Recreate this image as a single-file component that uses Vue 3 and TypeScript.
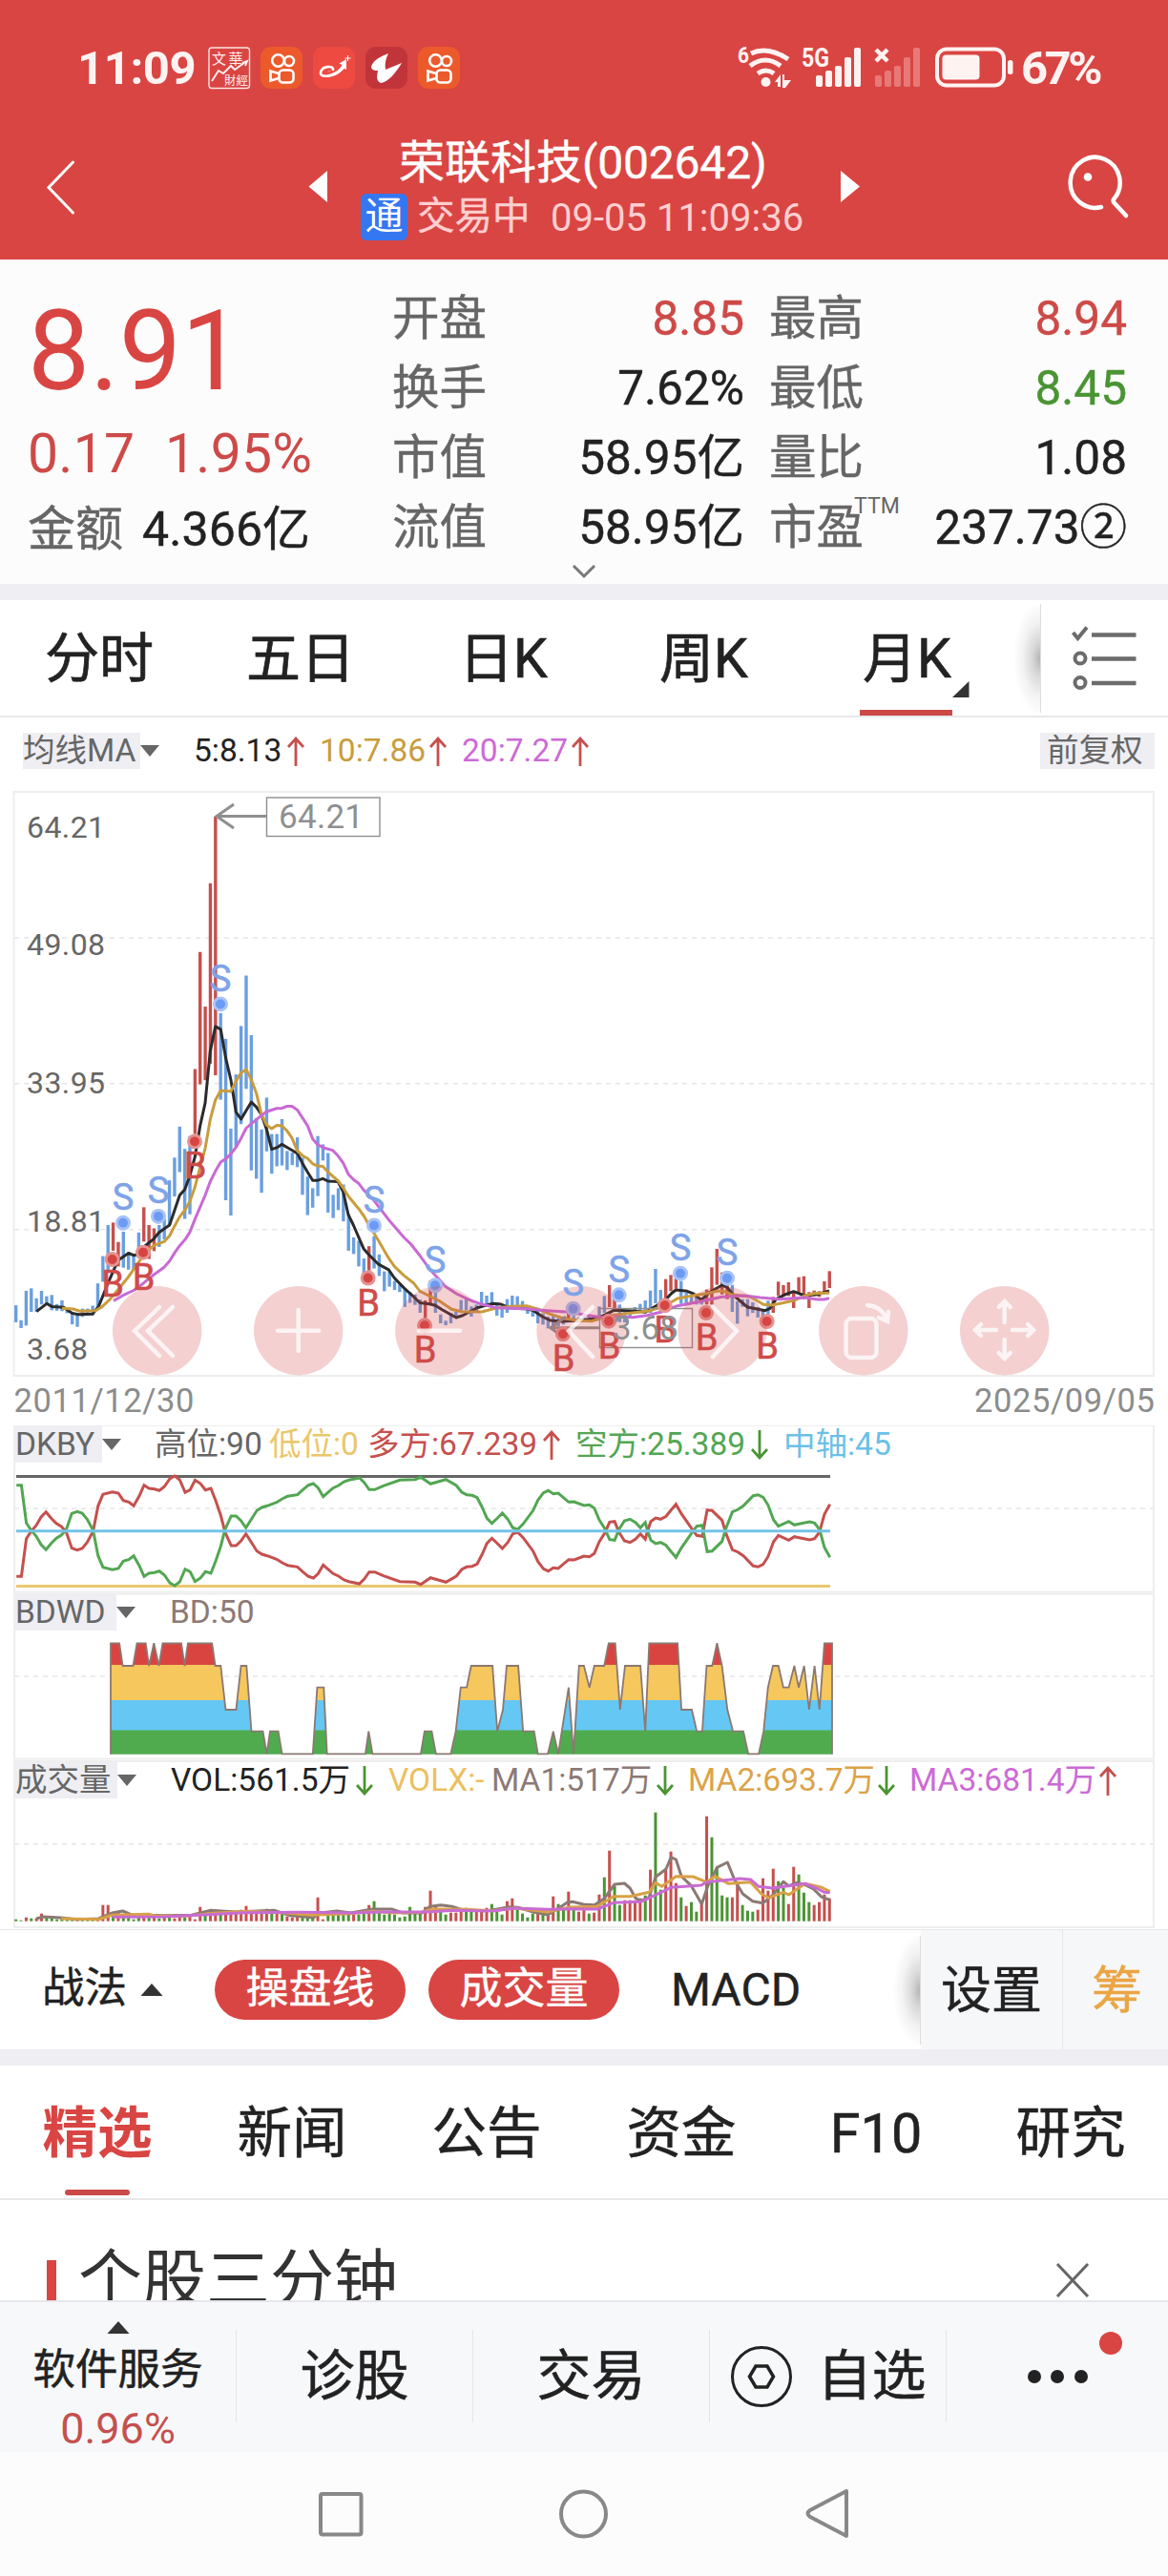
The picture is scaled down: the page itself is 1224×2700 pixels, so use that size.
<script setup lang="ts">
type Pt = [number, number]
interface Legend { text: string; color: string; w: number; arrow?: 'up' | 'down'; tw?: number }

const STEP = 5.362
const barX = (i: number): number => 16.7 + STEP * i

// Two sampling grids: the first 80 months and the remainder
const early = ([x, y]: Pt): Pt => [x / 3, 820 + y / 2.306]
const late = ([x, y]: Pt): Pt => [430 + x / 3, 1080 + y / 3]
const sub = (top: number) => ([x, y]: Pt): Pt => [x / 1.742, top + y / 3]
const toPath = (pts: Pt[]): string => pts.map(p => p[0].toFixed(1) + ',' + p[1].toFixed(1)).join(' ')
const parse = (s: string): Pt[] => s.trim().split(/\s+/).map(p => p.split(',').map(Number) as Pt)

const earlyBars = '1264,1305 1300,1319 1229,1313 1223,1280 1247,1280 1229,1262 1242,1262 1239,1276 1261,1277 1252,1278 1270,1283 1280,1310 1282,1316 1272,1292 1272,1288 1265,1288 1211,1270 1145,1207 1070,1185 1064,1132 1111,1170 1086,1173 1135,1178 1140,1178 1088,1150 1027,1110 1070,1152 1078,1133 1070,1123 1055,1105 962,1070 907,1001 832,942 886,1055 855,1044 693,850 410,730 542,720 244,680 83,708 558,767 620,1010 837,1047 706,880 589,826 467,741 611,938 812,958 839,992 762,892 850,946 850,928 814,926 891,937 895,925 858,930 907,997 953,1046 981,1028 855,1000 875,914 896,1040 997,1053 981,1034 972,1061 1043,1132 1100,1140 1108,1170 1151,1195 1121,1180 1097,1175 1141,1193 1182,1230 1182,1219 1205,1227 1214,1232 1225,1268 1232,1258 1238,1263 1250,1282'
const lateBars = '849,905 787,860 825,888 893,921 913,927 888,921 885,900 848,880 845,880 868,900 862,888 822,860 834,862 823,860 855,897 870,903 845,888 834,870 836,868 851,880 868,891 878,900 880,921 890,925 900,937 898,935 905,930 900,925 885,915 895,912 902,918 895,915 900,915 898,912 868,900 835,888 801,870 834,880 862,917 880,918 880,900 870,890 860,885 849,882 818,888 750,858 816,855 782,850 769,820 780,812 788,860 825,860 835,860 835,862 840,862 815,862 745,862 687,800 761,830 792,845 800,885 852,922 845,869 845,899 855,888 870,903 878,907 850,898 838,888 790,835 801,836 792,835 820,873 776,825 773,845 823,873 818,835 820,838 789,825 757,810'
const redSet = new Set<number>([19, 20, 25, 26, 27, 35, 36, 37, 38, 39, 69, 80, 81, 108, 116, 117, 127, 128, 129, 135, 136, 137, 138, 139])
const bars = [
  ...parse(earlyBars).map(([a, b]) => [820 + a / 2.306, 820 + b / 2.306]),
  ...parse(lateBars).map(([a, b]) => [1080 + a / 3, 1080 + b / 3]),
].map(([a, b], i) => ({ x: barX(i) - 1.7, y: a, h: b - a, fill: redSet.has(i) || i >= 148 ? '#c5504e' : '#6b9fdf' }))

const line = (a: string, b: string): string => toPath([...parse(a).map(early), ...parse(b).map(late)])
const ma5 = line(
  '115,1279 147,1260 163,1267 200,1269 227,1283 245,1286 291,1285 310,1267 340,1210 371,1155 404,1138 420,1143 436,1141 452,1123 484,1103 500,1088 533,1070 565,998 581,984 597,950 613,905 629,830 645,775 661,650 677,590 694,597 710,668 726,720 742,797 758,814 774,793 790,773 806,785 822,803 838,838 854,887 870,883 886,875 902,882 935,897 951,921 967,942 983,962 999,962 1015,958 1031,964 1063,965 1079,990 1095,1045 1111,1070 1143,1127 1160,1142 1190,1165 1222,1178 1240,1198 1270,1222 1300,1243 1320,1258',
  '60,860 79,865 100,878 144,903 165,896 210,872 260,859 285,861 310,872 350,873 385,880 415,900 440,912 475,915 530,912 590,905 615,893 640,880 700,882 740,886 770,868 800,850 820,828 835,816 870,820 890,828 915,848 940,824 980,801 996,808 1015,832 1060,870 1090,876 1115,881 1130,875 1150,845 1180,830 1205,821 1240,834 1280,830 1317,819')
const ma10 = line(
  '195,1271 230,1273 250,1278 300,1277 320,1268 345,1250 371,1226 404,1195 436,1160 452,1142 484,1119 516,1110 533,1096 549,1072 565,1050 581,1034 597,1013 613,978 629,930 645,885 661,815 677,768 694,745 726,747 742,722 758,702 774,694 790,718 806,752 822,802 838,828 854,837 870,829 886,830 902,842 918,860 935,891 951,902 967,909 983,922 999,927 1015,928 1031,942 1063,963 1079,980 1095,1000 1127,1030 1143,1047 1160,1070 1190,1108 1222,1150 1240,1170 1270,1192 1300,1210 1320,1230',
  '40,825 90,850 130,877 160,884 225,885 270,873 320,868 365,866 400,876 440,892 480,905 530,913 570,914 600,905 640,895 700,888 750,882 800,866 840,843 900,832 930,828 965,819 985,820 1010,830 1070,838 1110,862 1135,864 1170,857 1210,848 1240,834 1270,827 1317,826')
const ma20 = line(
  '357,1253 387,1240 420,1228 452,1210 484,1190 516,1172 533,1157 549,1137 565,1120 581,1106 597,1087 613,1056 645,998 661,965 677,940 694,918 710,910 726,898 742,882 758,860 774,836 790,825 822,805 838,796 870,788 886,788 902,783 918,783 935,792 967,830 983,862 999,876 1020,884 1047,890 1063,903 1079,920 1095,947 1111,960 1127,969 1143,985 1175,1010 1222,1057 1270,1100',
  '0,670 30,708 60,750 110,805 145,828 180,845 220,860 270,872 360,875 430,881 500,886 550,895 600,902 640,900 700,902 745,896 790,885 840,866 900,855 980,838 1050,834 1100,840 1160,845 1240,840 1280,846 1300,846 1317,842')

const sells: Pt[] = [...parse('387,1065 498,1049 693,536 1176,1071').map(early), ...parse('78,802 512,875 656,832 849,764 996,779').map(late)]
const buys: Pt[] = [...parse('353,1153 450,1136 612,868 1157,1198').map(early), ...parse('45,928 480,955 624,914 800,865 930,888 1121,915').map(late)]

const axis = [
  { t: '64.21', y: 878 }, { t: '49.08', y: 1001 }, { t: '33.95', y: 1146 }, { t: '18.81', y: 1291 }, { t: '3.68', y: 1425 },
]
const grid = [983, 1135.7, 1288.8]
const buttons = [164.7, 312.7, 460.8, 609, 757, 904.8, 1052.7]

const bull = parse('30,517 39,517 48,398 57,375 66,357 75,330 84,314 94,335 103,350 112,360 121,378 131,428 141,434 150,429 159,410 170,375 179,295 188,259 205,251 216,255 225,278 235,283 244,295 254,265 263,230 272,240 282,242 291,247 300,235 310,210 319,201 328,213 338,253 347,245 356,214 366,225 375,245 385,240 394,280 403,325 411,378 422,420 431,420 440,405 449,383 459,410 469,437 478,447 488,452 505,463 516,475 525,482 543,487 553,503 563,517 572,522 581,508 590,481 608,508 618,516 628,528 637,533 656,540 665,525 674,503 684,503 700,515 730,533 758,535 768,542 786,521 800,528 814,535 833,516 843,495 852,487 862,485 871,478 880,448 889,413 898,397 908,413 917,429 927,410 936,383 945,378 955,395 973,437 982,470 992,493 1001,500 1010,490 1019,492 1038,464 1048,465 1066,453 1076,455 1085,445 1094,408 1104,380 1113,346 1122,344 1130,378 1140,405 1150,410 1160,400 1169,383 1178,400 1182,375 1188,344 1197,333 1206,337 1216,328 1225,308 1234,290 1244,320 1262,365 1272,388 1282,391 1291,308 1300,310 1318,340 1326,385 1337,433 1347,440 1357,452 1375,484 1384,487 1393,479 1402,455 1412,408 1421,388 1440,403 1450,392 1459,395 1478,402 1487,398 1496,378 1505,322 1515,290')
const bullLine = toPath(bull.map(sub(1480)))
const bearLine = toPath(bull.map(([x, y]): Pt => [x, 747 - y]).map(sub(1480)))

const wave = toPath(parse('202,1076 202,727 218,727 224,798 243,798 250,727 266,727 272,798 281,727 290,798 297,727 331,727 337,798 343,727 387,727 393,798 403,798 412,936 431,936 440,798 450,798 459,1004 480,1004 487,1075 493,1004 508,1004 515,1075 571,1075 579,866 591,866 597,1075 667,1075 673,1004 680,1075 768,1075 775,1004 788,1004 796,1075 823,1075 832,1004 841,866 852,866 860,798 899,798 908,1004 918,936 925,798 946,798 955,1004 975,1004 982,1075 1000,1075 1010,1004 1019,1075 1038,866 1047,1075 1057,798 1066,798 1076,866 1085,798 1103,798 1111,727 1123,727 1132,936 1141,798 1169,798 1178,1004 1185,727 1237,727 1244,936 1263,936 1272,1004 1282,1004 1290,798 1300,798 1309,727 1318,798 1328,936 1338,1004 1357,1004 1366,1075 1385,1075 1394,1004 1402,866 1411,798 1421,798 1430,866 1440,866 1450,798 1458,866 1468,798 1477,936 1487,798 1496,936 1505,727 1519,727 1519,1076').map(sub(1480)))

const volumes = '2g 1g 4r 3g 3r 8r 4g 4g 2g 3g 3g 3g 2r 2g 2g 2g 3r 17r 17r 9g 9r 7g 5g 2g 4g 7r 6g 5r 3g 4r 5g 3r 6r 4g 5r 2r 15r 11g 10r 12r 8g 9r 11r 11r 12r 16r 11r 10r 12r 13r 8g 9r 8g 5r 4r 6r 4g 5g 4g 25r 2r 8g 9g 11g 9g 8g 8r 7g 8g 17r 21g 9g 7g 8g 7g 4g 5g 15g 9g 8g 15r 32r 17r 13g 7g 9r 9r 12r 14g 12g 11r 12r 14r 18g 12g 7g 21r 24r 12g 8g 4g 8g 9r 9g 8r 26r 18g 12g 31r 13g 10r 15r 8g 9r 28r 46g 74r 37g 17g 22r 22r 22r 24r 27g 54r 114g 33g 54r 73r 40r 25g 16r 20g 10g 20r 110r 88g 57g 27g 25g 25r 42r 17g 11g 10g 12r 45r 32r 55r 42g 35g 18r 57r 49g 30g 20g 17r 20r 28r 24r'
  .split(' ').map((s, i) => ({ x: barX(i) - 1.5, h: parseInt(s), fill: s.endsWith('r') ? '#c5504e' : '#4a9433' }))
const vol = (s: string): string => toPath(parse(s).map(sub(1830)))
const v1 = vol('66,543 80,537 110,540 140,545 180,543 205,525 224,519 240,531 300,533 350,532 385,517 430,522 460,520 500,517 530,533 560,538 572,540 585,525 615,519 640,525 680,513 715,513 735,525 770,525 785,505 805,500 825,505 845,516 890,518 930,506 945,508 975,523 1000,531 1020,510 1035,493 1045,490 1065,498 1085,500 1103,480 1122,435 1140,432 1150,447 1160,478 1170,487 1185,475 1197,412 1216,387 1225,350 1234,357 1244,410 1262,440 1281,497 1292,440 1309,382 1328,366 1342,425 1356,465 1374,488 1393,494 1410,470 1430,427 1440,440 1455,430 1470,437 1485,450 1500,475 1515,484')
const v2 = vol('112,543 180,545 205,532 270,529 285,535 340,535 390,526 450,520 520,525 570,532 640,527 680,520 720,525 770,523 790,513 850,514 900,518 940,510 1000,522 1040,507 1090,505 1120,473 1150,473 1185,460 1197,430 1208,442 1234,410 1265,411 1290,428 1305,410 1330,433 1370,428 1390,465 1403,478 1430,460 1440,468 1470,433 1500,445 1515,458')
const v3 = vol('205,538 300,537 380,530 450,524 550,523 640,525 700,522 780,522 830,517 900,519 940,510 1000,514 1050,512 1090,513 1120,493 1170,490 1195,470 1225,445 1280,438 1290,428 1350,417 1370,420 1385,442 1410,447 1470,433 1490,447 1505,460 1515,461')

const dkby: Legend[] = [
  { text: '高位:90', color: '#666', w: 120 },
  { text: '低位:0', color: '#ebc66a', w: 103 },
  { text: '多方:67.239', color: '#c5504e', w: 218, arrow: 'up', tw: 184 },
  { text: '空方:25.389', color: '#53a653', w: 218, arrow: 'down', tw: 184 },
  { text: '中轴:45', color: '#6cc0e8', w: 130 },
]
const volLegend: Legend[] = [
  { text: 'VOL:561.5万', color: '#222', w: 228, arrow: 'down', tw: 194 },
  { text: 'VOLX:-', color: '#ebc05f', w: 108 },
  { text: 'MA1:517万', color: '#8d7975', w: 206, arrow: 'down', tw: 173 },
  { text: 'MA2:693.7万', color: '#dba348', w: 232, arrow: 'down', tw: 199 },
  { text: 'MA3:681.4万', color: '#cc6ad6', w: 230, arrow: 'up', tw: 199 },
]
const maLegend: Legend[] = [
  { text: '5:8.13', color: '#222', w: 132, arrow: 'up', tw: 98 },
  { text: '10:7.86', color: '#c99c3d', w: 149, arrow: 'up', tw: 115 },
  { text: '20:7.27', color: '#cc6ad6', w: 150, arrow: 'up', tw: 115 },
]
const stats = [
  ['开盘', '8.85', 'red', '最高', '8.94', 'red'],
  ['换手', '7.62%', '', '最低', '8.45', 'green'],
  ['市值', '58.95亿', '', '量比', '1.08', ''],
  ['流值', '58.95亿', '', '市盈', '237.73②', ''],
]
const periods = [{ t: '分时', w: 211 }, { t: '五日', w: 223 }, { t: '日K', w: 210 }, { t: '周K', w: 213 }, { t: '月K', w: 100 }]
const tabs = ['精选', '新闻', '公告', '资金', 'F10', '研究']
const frames = [{ y: 1494, h: 174.5, g: 1581 }, { y: 1670.5, h: 173, g: 1757 }, { y: 1846, h: 174, g: 1932.7 }]
</script>

<template>
  <div class="screen">
    <header class="top">
      <div class="status">
        <span class="clock">11:09</span>
        <svg class="apps" width="266" height="46" viewBox="217 48 266 46">
          <rect x="219" y="50" width="42.500" height="42.500" rx="3" fill="none" stroke="#fbe4e2" stroke-width="1.400" />
          <g fill="#fdeeee" class="seal">
            <text x="222" y="67" font-size="15">文</text><text x="239.500" y="67" font-size="15">華</text>
            <text x="235" y="89" font-size="12.500">財</text><text x="247.500" y="89" font-size="12.500">經</text>
          </g>
          <path d="M222 85l7-11 5 3 8-8 4 4 11-8M254 66l5-2-2 5" fill="none" stroke="#fdeeee" stroke-width="2" />
          <g v-for="x in [273, 438]" :key="x" :transform="`translate(${x} 49)`">
            <rect width="44" height="44" rx="11" fill="#ec5a2b" />
            <g fill="none" stroke="#fff" stroke-width="2.600">
              <circle cx="18.500" cy="14.500" r="6.300" /><circle cx="30" cy="15" r="5" />
              <rect x="19.500" y="24.500" width="15" height="13" rx="4" /><path d="M19 28l-8.500-2.500v10L19 33" />
            </g>
          </g>
          <rect x="328" y="49" width="44" height="44" rx="11" fill="#ee4a42" />
          <path d="M349 73c1-5-13-4-13 4 0 4 12 5 25-7" fill="none" stroke="#fff" stroke-width="2.600" stroke-linecap="round" />
          <path d="M339 80c9 0 17-7 19.500-12l-3-1.500L363 62v11l-2.500-1.500c-5 7-14 11-21.500 8.500zM343 76c2-2 3-2 5-3" fill="#fff" />
          <path d="M364.500 58v6M361.500 61h6" stroke="#fff" stroke-width="1" />
          <rect x="383" y="49" width="44" height="44" rx="11" fill="#c1353a" />
          <path d="M407 56c-8 3-16 7-18 14 0 4 5 4 7 4-1 6-2 11 3 13 8-1 16-11 22-21l-17 7c-1-6 0-11 3-17z" fill="#fff" />
        </svg>
        <svg class="signal" width="298" height="50" viewBox="768 46 298 50" fill="#fff3f2">
          <g class="tiny"><text x="773" y="66" font-size="23" textLength="12" lengthAdjust="spacingAndGlyphs">6</text><text x="840" y="70" font-size="28" textLength="29" lengthAdjust="spacingAndGlyphs">5G</text></g>
          <g fill="none" stroke="#fff3f2" stroke-width="5"><path d="M787 56q17-8 39 6M786 69q16-12 32 0M794 77q9-6 17 0" /></g>
          <circle cx="802.500" cy="86" r="5" />
          <path d="M812 86l6-8v13h-3v-5zM822 78v6h7l-6 8h-3V78z" />
          <rect x="855" y="79" width="7" height="12" rx="2" /><rect x="865" y="74" width="7" height="17" rx="2" /><rect x="875" y="69" width="7" height="22" rx="2" /><rect x="885" y="60" width="7" height="31" rx="2" /><rect x="895" y="50" width="7" height="41" rx="2" />
          <path d="M918 52l12 12M930 52l-12 12" stroke="#fff3f2" stroke-width="4.500" />
          <g fill="#e87977"><rect x="917" y="79" width="7" height="12" rx="2" /><rect x="927" y="74" width="7" height="17" rx="2" /><rect x="937" y="69" width="7" height="22" rx="2" /><rect x="947" y="60" width="7" height="31" rx="2" /><rect x="957" y="50" width="7" height="41" rx="2" /></g>
          <rect x="982" y="51.500" width="70" height="38" rx="10" fill="none" stroke="#fff3f2" stroke-width="4" />
          <rect x="987.500" y="57.500" width="39" height="26" rx="4" /><rect x="1056" y="63" width="5.500" height="15" rx="2.500" />
        </svg>
        <span class="pct">67%</span>
      </div>
      <div class="title">
        <svg class="back" width="40" height="60" viewBox="44 166 40 60" fill="none" stroke="#fff" stroke-width="3"><path d="M76.500 170L51 196.500l25.500 26.500" stroke-linecap="round" /></svg>
        <svg class="prev" width="22" height="36" viewBox="322 178 22 36"><path d="M343 179v33l-19.500-16.500z" fill="#fff" /></svg>
        <div class="names">
          <div class="name">荣联科技<span>(002642)</span></div>
          <div class="time"><i>通</i><b>交易中</b><span>09-05 11:09:36</span></div>
        </div>
        <svg class="next" width="22" height="36" viewBox="880 178 22 36"><path d="M881 179v33l20-16.500z" fill="#fff" /></svg>
        <svg class="search" width="66" height="68" viewBox="1118 162 66 68" fill="none" stroke="#fff" stroke-width="4.500" stroke-linecap="round">
          <path d="M1154 217a26 26.500 0 1 1 13-8q-1 2 1 4l12 13" /><circle cx="1140" cy="185.500" r="4.300" fill="#fff" stroke="none" />
        </svg>
      </div>
    </header>

    <section class="quote">
      <div class="left">
        <div class="price">8.91</div>
        <div class="chg"><span>0.17</span><span>1.95%</span></div>
        <div class="amt"><span>金额</span><b>4.366亿</b></div>
      </div>
      <div class="stats">
        <div v-for="(r, i) in stats" :key="i" class="row">
          <span class="k">{{ r[0] }}</span><span class="v" :class="r[2]">{{ r[1] }}</span>
          <span class="k k2">{{ r[3] }}<sup v-if="i === 3">TTM</sup></span><span class="v v2" :class="r[5]">{{ r[4] }}</span>
        </div>
      </div>
      <svg class="more" width="26" height="16" viewBox="0 0 26 16"><path d="M2 2l11 11L24 2" fill="none" stroke="#777" stroke-width="3" /></svg>
    </section>

    <nav class="periods">
      <span v-for="p in periods" :key="p.t" :style="{ width: p.w + 'px' }" :class="{ on: p.t === '月K' }">{{ p.t }}</span>
      <svg class="corner" width="18" height="17"><path d="M17.500 0v17H0z" fill="#333" /></svg>
      <div class="shade"></div>
      <div class="list">
        <svg width="72" height="70" viewBox="1121 655 72 70" fill="none" stroke="#6c6c6c" stroke-width="4">
          <path d="M1124.500 663l5 6 9.500-11.500" /><circle cx="1132" cy="690" r="5.500" /><circle cx="1132" cy="715.500" r="5.500" />
          <path d="M1144 665.500h46.500M1144 690.500h46.500M1144 716h46.500" stroke-width="4.500" />
        </svg>
      </div>
    </nav>

    <div class="legend ma">
      <span class="tag" style="width: 123px">均线MA</span><i class="caret"></i>
      <span v-for="(l, i) in maLegend" :key="l.text" class="item" :class="{ first: i === 0 }" :style="{ width: l.w + 'px', color: l.color }">
        <em :style="{ width: l.tw + 'px' }">{{ l.text }}</em>
        <svg width="18" height="31" viewBox="0 0 18 31"><path d="M9 31V2M1 11L9 2l8 9" fill="none" stroke="#c5504e" stroke-width="2.800" /></svg>
      </span>
      <span class="adj">前复权</span>
    </div>

    <svg class="chart" width="1224" height="678" viewBox="0 816 1224 678">
      <rect x="14.500" y="830" width="1194.500" height="612" fill="#fff" stroke="#eee" stroke-width="2" />
      <g stroke="#e6e6e6" stroke-width="1.500" stroke-dasharray="5 5"><path v-for="y in grid" :key="y" :d="`M15 ${y}H1209`" /></g>
      <g fill="#666" font-size="32"><text v-for="a in axis" :key="a.t" x="28" :y="a.y" :textLength="a.t.length > 4 ? 82 : 64">{{ a.t }}</text></g>
      <rect v-for="(b, i) in bars" :key="i" :x="b.x" :y="b.y" width="3.400" :height="b.h" :fill="b.fill" />
      <g fill="none" stroke-linejoin="round" stroke-width="3">
        <polyline :points="ma5" stroke="#2b2b2b" /><polyline :points="ma10" stroke="#c99c3d" /><polyline :points="ma20" stroke="#c86ad4" />
      </g>
      <g fill="none" stroke="#8f8f8f" stroke-width="3">
        <path d="M279 855.500H227M245 843l-18 12.500 18 12.500" /><path d="M628 1391.700H577M593 1380l-16 11.700 16 12" />
        <g stroke-width="1.400"><rect x="279.500" y="836" width="118.500" height="40.500" /><rect x="628.500" y="1371.500" width="97" height="41" /></g>
      </g>
      <g v-for="(p, i) in sells" :key="'s' + i"><circle :cx="p[0]" :cy="p[1]" r="8" fill="#a7c3f7" /><circle :cx="p[0]" :cy="p[1]" r="5" fill="#6d9bf3" /></g>
      <g v-for="(p, i) in buys" :key="'b' + i"><circle :cx="p[0]" :cy="p[1]" r="8" fill="#e59390" /><circle :cx="p[0]" :cy="p[1]" r="5" fill="#d64543" /></g>
      <circle v-for="x in buttons" :key="x" :cx="x" cy="1394.700" r="46.700" fill="#d64a4d" fill-opacity=".26" />
      <g fill="none" stroke="#fff" stroke-opacity=".75" stroke-width="4.500" stroke-linecap="round">
        <path d="M167 1370l-26 25 26 26M181 1370l-26 25 26 26" />
        <path d="M291 1394.700h43M312.700 1373v43M439 1394.700h43" />
        <path d="M621 1370l-25 25 25 27M747 1370l25 25-25 27" />
        <rect x="886.500" y="1382" width="32" height="41" rx="6" /><path d="M909 1368q14 1 20 14M921 1381l9 4 1-10" />
        <path d="M1052.700 1386v-22m-6 6l6-6 6 6M1052.700 1404v20m-6-6l6 6 6-6M1044 1394h-22m6-6l-6 6 6 6M1061 1394h22m-6-6l6 6-6 6" />
      </g>
      <g font-size="38" text-anchor="middle" stroke-width=".6">
        <text v-for="(p, i) in sells" :key="'st' + i" :x="p[0]" :y="p[1] - 13.500" fill="#7ea3e8" stroke="#7ea3e8">S</text>
        <text v-for="(p, i) in buys" :key="'bt' + i" :x="p[0] + .5" :y="p[1] + 39" fill="#cf4b49" stroke="#cf4b49">B</text>
      </g>
      <g fill="#8f8f8f" font-size="35"><text x="292" y="867.500" textLength="89">64.21</text><text x="642" y="1404" textLength="69">3.68</text></g>
      <g fill="#8c8c8c" font-size="34.500"><text x="14.500" y="1479.500" textLength="189">2011/12/30</text><text x="1021" y="1479.500" textLength="189">2025/09/05</text></g>
    </svg>

    <div class="panels">
      <svg class="plot" width="1224" height="528" viewBox="0 1494 1224 528">
        <g v-for="f in frames" :key="f.y">
          <rect x="15" :y="f.y" width="1194" :height="f.h" fill="none" stroke="#eee" stroke-width="2" />
          <path :d="`M15 ${f.g}H1209`" stroke="#e6e6e6" stroke-width="1.500" stroke-dasharray="5 5" />
        </g>
        <g fill="none" stroke-width="3">
          <path d="M17 1547.500H870" stroke="#666" /><path d="M17 1662.500H870" stroke="#ebc76f" />
          <polyline :points="bullLine" stroke="#c5504e" /><polyline :points="bearLine" stroke="#53a653" />
          <path d="M17 1604.700H870" stroke="#75c3e6" />
        </g>
        <defs><clipPath id="wave"><polygon :points="wave" /></clipPath></defs>
        <g clip-path="url(#wave)">
          <rect x="100" y="1721" width="790" height="25" fill="#d94441" /><rect x="100" y="1745" width="790" height="38" fill="#f5c75c" />
          <rect x="100" y="1782" width="790" height="33" fill="#65c7f4" /><rect x="100" y="1813.500" width="790" height="27" fill="#50ab4e" />
        </g>
        <polyline :points="wave" fill="none" stroke="#8b7872" stroke-width="1.800" />
        <rect v-for="(v, i) in volumes" :key="i" :x="v.x" :y="2013.700 - v.h" width="3" :height="v.h" :fill="v.fill" />
        <g fill="none" stroke-width="3" stroke-linejoin="round">
          <polyline :points="v1" stroke="#8b7974" /><polyline :points="v2" stroke="#d9a145" /><polyline :points="v3" stroke="#c96bd3" />
        </g>
      </svg>
      <div class="legend">
        <span class="tag" style="width: 91px">DKBY</span><i class="caret"></i>
        <span v-for="(l, i) in dkby" :key="l.text" class="item" :class="{ d1: i === 0 }" :style="{ width: l.w + 'px', color: l.color }">
          <em :style="{ width: l.tw ? l.tw + 'px' : 'auto' }">{{ l.text }}</em>
          <svg v-if="l.arrow" width="18" height="31" viewBox="0 0 18 31"><path :d="l.arrow === 'up' ? 'M9 31V2M1 11L9 2l8 9' : 'M9 0V29M1 20L9 29l8-9'" fill="none" :stroke="l.arrow === 'up' ? '#c5504e' : '#4a9433'" stroke-width="2.800" /></svg>
        </span>
      </div>
      <div class="legend">
        <span class="tag" style="width: 106px">BDWD</span><i class="caret"></i>
        <span class="item b1" style="color: #8d7975"><em>BD:50</em></span>
      </div>
      <div class="legend">
        <span class="tag" style="width: 107px">成交量</span><i class="caret"></i>
        <span v-for="(l, i) in volLegend" :key="l.text" class="item" :class="{ b1: i === 0 }" :style="{ width: l.w + 'px', color: l.color }">
          <em :style="{ width: l.tw ? l.tw + 'px' : 'auto' }">{{ l.text }}</em>
          <svg v-if="l.arrow" width="18" height="31" viewBox="0 0 18 31"><path :d="l.arrow === 'up' ? 'M9 31V2M1 11L9 2l8 9' : 'M9 0V29M1 20L9 29l8-9'" fill="none" :stroke="l.arrow === 'up' ? '#c5504e' : '#4a9433'" stroke-width="2.800" /></svg>
        </span>
      </div>
    </div>

    <div class="tools">
      <span class="tactic">战法</span><svg class="uptri" width="24" height="13"><path d="M12 0l11.500 13H.5z" fill="#333" /></svg>
      <span class="pill">操盘线</span><span class="pill p2">成交量</span><span class="macd">MACD</span>
      <div class="shade s2"></div>
      <span class="set">设置</span><span class="chip">筹</span>
    </div>

    <nav class="tabs"><span v-for="t in tabs" :key="t" :class="{ active: t === '精选' }">{{ t }}</span></nav>

    <section class="card">
      <i></i><h2>个股三分钟</h2>
      <svg width="36" height="36" viewBox="0 0 36 36"><path d="M2 1l32 34M34 1L2 35" stroke="#666" stroke-width="3" /></svg>
    </section>

    <footer class="bottom">
      <div class="cell sector"><svg width="24" height="13"><path d="M12 0l11.500 13H.5z" fill="#333" /></svg><span>软件服务</span><b>0.96%</b></div>
      <div class="cell">诊股</div>
      <div class="cell">交易</div>
      <div class="cell fav">
        <svg width="66" height="66" viewBox="-33 -33 66 66" fill="none" stroke="#222"><circle r="30.500" stroke-width="3" /><path d="M-12.500 0L-6-11H6L12.500 0 6 11H-6z" stroke-width="3.500" /></svg>自选
      </div>
      <div class="cell dots"><i></i><i></i><i></i><u></u></div>
    </footer>

    <div class="system">
      <svg width="1224" height="130" viewBox="0 2570 1224 130" fill="none" stroke="#888" stroke-width="4" stroke-linejoin="round">
        <rect x="336" y="2614" width="42.500" height="42.500" rx="2" /><circle cx="611.500" cy="2635" r="23.500" /><path d="M887 2611v47l-38-20q-5-3.500 0-7z" />
      </svg>
    </div>
  </div>
</template>

<style>
body { margin: 0; background: #fff; }
</style>

<style scoped>
.screen { width: 1224px; height: 2700px; overflow: hidden; background: #fff; color: #222; font-family: Roboto, "Noto Sans CJK SC", sans-serif; white-space: nowrap; }
svg { display: block; flex: none; }
i, em { font-style: normal; }
.top { height: 272px; background: #d94543; color: #fff; }
.status { height: 140px; display: flex; align-items: flex-start; color: #fff3f2; }
.clock, .pct { font-weight: 700; font-size: 49px; line-height: 50px; margin-top: 47px; }
.clock { margin-left: 81px; width: 136px; letter-spacing: -.4px; }
.apps { margin-top: 48px; }
.seal { font-family: "Noto Sans CJK TC"; }
.signal { margin-top: 46px; margin-left: 285px; }
.tiny { font-weight: 700; }
.pct { margin-left: 4px; letter-spacing: -3.500px; }
.title { height: 132px; display: flex; align-items: flex-start; }
.back { margin: 26px 0 0 44px; }
.prev { margin: 38px 0 0 238px; }
.names { margin-left: 34px; width: 502px; }
.name { font-size: 48px; line-height: 60px; padding: 1px 0 0 40px; -webkit-text-stroke: .4px; }
.name span { letter-spacing: -.2px; }
.time { display: flex; align-items: flex-start; height: 50px; margin-top: 2px; color: #ffcfd1; line-height: 48px; }
.time i { width: 49px; height: 49px; border-radius: 6px; background: #3577f0; color: #fff; font-size: 40px; line-height: 47px; text-align: center; }
.time b { font-weight: 400; font-size: 39.500px; margin-left: 10px; width: 140px; -webkit-text-stroke: .4px; }
.time span { font-size: 40px; line-height: 52px; }
.next { margin-top: 38px; }
.search { margin: 22px 0 0 216px; }
.quote { height: 340px; background: #fcfcfc; display: flex; position: relative; border-bottom: 17px solid #eeeef3; }
.left { width: 411px; padding-left: 29px; box-sizing: border-box; }
.price { font-size: 116px; line-height: 120px; color: #d94543; margin-top: 36px; letter-spacing: 0; }
.chg { display: flex; color: #cd4a48; font-size: 57px; line-height: 64px; margin-top: 16px; }
.chg span:first-child { width: 144px; }
.chg span { letter-spacing: .3px; }
.amt { display: flex; font-size: 50px; line-height: 60px; margin-top: 17px; color: #666; }
.amt span { width: 120px; -webkit-text-stroke: .4px; }
.amt b { font-weight: 400; color: #222; letter-spacing: .1px; -webkit-text-stroke: .4px; }
.stats { padding-top: 25.500px; -webkit-text-stroke: .4px; }
.row { display: flex; height: 73px; line-height: 73px; font-size: 49.500px; }
.k { width: 115px; color: #666; position: relative; }
.v { width: 254px; text-align: right; }
.k2 { margin-left: 26px; }
.k sup { position: absolute; left: 89px; top: -2px; font-size: 23px; line-height: 32px; -webkit-text-stroke: 0; }
.v2 { width: 260px; }
.red { color: #cd4a48; }
.green { color: #4a9433; }
.more { position: absolute; left: 599px; top: 319px; }
.periods { height: 121px; border-bottom: 2px solid #e8e8ea; display: flex; font-size: 57px; line-height: 124px; padding-left: 47px; box-sizing: content-box; -webkit-text-stroke: .7px; }
.periods .on { position: relative; width: 94px; }
.on::after { content: ""; position: absolute; left: -3px; bottom: 0; width: 97px; height: 6px; background: #cb4a48; }
.corner { margin: 85px 0 0 -6px; }
.shade { width: 28px; height: 114px; margin: 4px 0 0 47px; background: radial-gradient(ellipse 28px 60px at right center, #b4b4b4, #d8d8d8 30%, #f2f2f2 65%, #fff); border-right: 1px solid #ddd; box-sizing: border-box; }
.list { padding: 26px 0 0 30px; }
.legend { display: flex; align-items: flex-start; font-size: 33.500px; line-height: 38px; }
.tag { background: #eeeef3; color: #666; height: 38px; box-sizing: border-box; }
.caret { border: 10.500px solid transparent; border-top: 12px solid #666; border-bottom: 0; margin-top: 13px; }
.item { display: flex; }
.item svg { margin-top: 4px; }
.first { margin-left: 36px; }
.ma { height: 48px; padding: 16px 14px 0 24px; }
.adj { margin-left: auto; width: 120px; padding-left: 7px; background: #eeeef3; color: #666; box-sizing: border-box; }
.panels { height: 528px; position: relative; }
.panels .legend { height: 176px; padding: 1px 0 0 16px; box-sizing: border-box; position: relative; }
.plot { position: absolute; left: 0; top: 0; }
.d1 { margin-left: 35px; }
.b1 { margin-left: 36px; }
.tools { height: 126px; border-top: 1px solid #e6e6e8; box-sizing: border-box; display: flex; align-items: center; font-size: 45px; -webkit-text-stroke: .4px; }
.tactic { margin-left: 44px; width: 103px; font-size: 44.500px; line-height: 60px; margin-bottom: 4px; }
.pill { margin-left: 54px; width: 200px; height: 63px; border-radius: 32px; background: #d94543; color: #fff; text-align: center; line-height: 62px; }
.p2 { margin-left: 24px; }
.macd { margin-left: 54px; width: 259px; font-size: 48px; }
.s2 { margin: 0; width: 29px; margin-left: -26px; }
.set, .chip { background: #f6f7f9; height: 125px; line-height: 128px; font-size: 53px; box-sizing: border-box; }
.set { width: 149px; padding-left: 21px; border-right: 1px solid #e6e6e8; }
.chip { width: 110px; padding-left: 30px; color: #eba544; }
.tabs { height: 158px; border-top: 17px solid #eeeef3; border-bottom: 2px solid #e8e8ea; box-sizing: border-box; display: flex; line-height: 144px; font-size: 57.500px; -webkit-text-stroke: .5px; }
.tabs span { width: 204px; text-align: center; position: relative; }
.active { color: #d94543; font-weight: 700; -webkit-text-stroke: 0; }
.active::after { content: ""; position: absolute; left: 68px; bottom: 3px; width: 68px; height: 6px; border-radius: 3px; background: #cb4a48; }
.card { height: 105px; overflow: hidden; display: flex; align-items: flex-start; }
.card i { width: 10px; height: 60px; margin: 63px 0 0 49px; background: #d94543; }
.card h2 { margin: 34px 0 0 23px; width: 1024px; font-weight: 400; font-size: 67px; line-height: 100px; color: #333; }
.card svg { margin-top: 66px; }
.bottom { height: 159px; background: #f7f8fa; border-top: 2px solid #e6e7ea; box-sizing: border-box; display: flex; -webkit-text-stroke: .5px; }
.cell { flex: none; width: 248px; height: 97px; margin-top: 29px; border-right: 1px solid #e4e5e8; box-sizing: border-box; display: flex; align-items: center; justify-content: center; font-size: 57px; line-height: 99px; }
.cell:last-child { width: 232px; border: 0; position: relative; }
.sector { flex-direction: column; justify-content: flex-start; font-size: 44.500px; line-height: 63px; }
.sector svg { margin-top: -9px; flex: none; }
.sector span { margin-top: 7px; }
.sector b { font-weight: 400; color: #c5504e; font-size: 45px; line-height: 60px; -webkit-text-stroke: 0; }
.fav svg { margin-right: 26px; }
.dots { gap: 10.500px; }
.dots i { width: 14px; height: 14px; border-radius: 50%; background: #222; }
.dots u { position: absolute; width: 24px; height: 24px; border-radius: 50%; background: #d94543; left: 160px; top: 2px; }
.system { height: 130px; background: #fcfcfc; }
</style>
